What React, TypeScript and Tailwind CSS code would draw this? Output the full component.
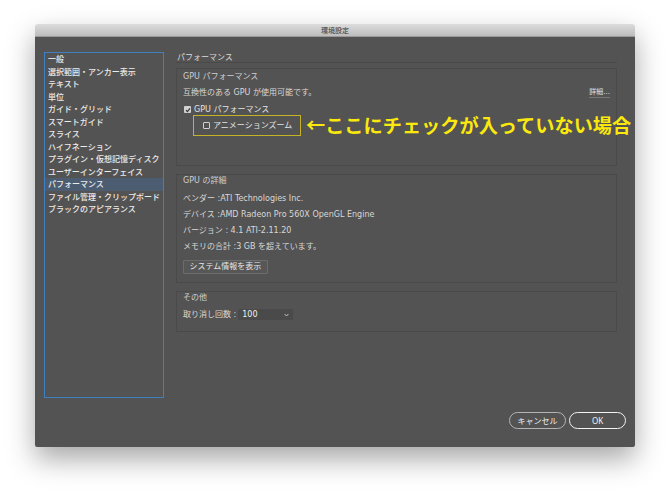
import React from "react";

const sidebarItems = [
  "一般",
  "選択範囲・アンカー表示",
  "テキスト",
  "単位",
  "ガイド・グリッド",
  "スマートガイド",
  "スライス",
  "ハイフネーション",
  "プラグイン・仮想記憶ディスク",
  "ユーザーインターフェイス",
  "パフォーマンス",
  "ファイル管理・クリップボード",
  "ブラックのアピアランス",
];

function CheckedBox() {
  return (
    <span className="inline-flex shrink-0 w-[7px] h-[7px] bg-[#d0d0d0] rounded-[1px] items-center justify-center">
      <svg width="6" height="6" viewBox="0 0 6 6">
        <path d="M1 3.2 L2.4 4.6 L5 1.4" stroke="#333" strokeWidth="1.1" fill="none" />
      </svg>
    </span>
  );
}

function EmptyBox() {
  return <span className="inline-block shrink-0 w-[7px] h-[7px] border border-[#cfcfcf] rounded-[1px]" />;
}

export default function App() {
  return (
    <div
      className="w-[670px] h-[493px] bg-white pl-[35px] pt-[24px]"
      style={{ fontFamily: '"Noto Sans", "Noto Sans CJK JP", sans-serif' }}
    >
      <div className="w-[600px] h-[423px] flex flex-col rounded-[3px] overflow-visible shadow-[0_12px_28px_rgba(0,0,0,0.35)]">
        {/* title bar */}
        <div className="h-[13px] rounded-t-[3px] bg-gradient-to-b from-[#dcdcdc] to-[#bdbdbd] flex items-center justify-center border-b border-[#9a9a9a]">
          <span className="text-[7px] leading-none text-[#333]">環境設定</span>
        </div>
        {/* body */}
        <div className="flex-1 bg-[#535353] flex flex-col pl-[9px] pt-[15px] rounded-b-[2px]">
          <div className="flex h-[346px]">
            {/* sidebar */}
            <div className="w-[120px] h-[346px] border border-[#3f80c2] flex flex-col">
              {sidebarItems.map((t) => (
                <div
                  key={t}
                  className={
                    "h-[12.5px] flex items-center pl-[3px] text-[8px] leading-none font-medium text-[#ececec] whitespace-nowrap " +
                    (t === "パフォーマンス" ? "bg-[#4c5d71]" : "")
                  }
                >
                  {t}
                </div>
              ))}
            </div>
            {/* content */}
            <div
              className="ml-[12px] w-[441px] flex flex-col text-[8px] text-[#d8d8d8]"
              style={{ fontFamily: '"DejaVu Sans", "Noto Sans CJK JP", sans-serif' }}
            >
              <div className="h-[11px] leading-[11px] pl-[1px] border-b border-[#4a4a4a] text-[#dcdcdc]">
                パフォーマンス
              </div>
              {/* group 1 */}
              <div className="mt-[5px] h-[98px] border border-[#4a4a4a] pl-[6px] pr-[6px] pt-[2px]">
                <div className="h-[11px] leading-[11px] text-[#cfcfcf]">GPU パフォーマンス</div>
                <div className="mt-[5px] h-[11px] leading-[11px] flex justify-between">
                  <span>互換性のある GPU が使用可能です。</span>
                  <span className="text-[7px] text-[#e0e0e0] border-b border-[#777] leading-[10px]">詳細...</span>
                </div>
                <div className="mt-[6px] h-[11px] flex items-center gap-[3px] pl-[1px]">
                  <CheckedBox />
                  <span className="leading-[11px] text-[#e4e4e4]">GPU パフォーマンス</span>
                </div>
                <div className="flex items-center">
                  <div className="shrink-0 ml-[10px] w-[108px] h-[21px] border-[1.5px] border-[#c4b324] flex items-center pl-[9px] gap-[3px]">
                    <EmptyBox />
                    <span className="leading-[11px] text-[#e4e4e4] whitespace-nowrap">アニメーションズーム</span>
                  </div>
                  <span
                    className="ml-[5px] shrink-0 whitespace-nowrap text-[19.2px] leading-[21px] font-bold text-[#fbe90e]"
                    style={{ fontFamily: '"Noto Sans CJK JP", sans-serif' }}
                  >
                    ←ここにチェックが入っていない場合
                  </span>
                </div>
              </div>
              {/* group 2 */}
              <div className="mt-[8px] h-[109px] border border-[#4a4a4a] pl-[6px] pt-[0px]">
                <div className="h-[11px] leading-[11px] text-[#cfcfcf]">GPU の詳細</div>
                <div className="mt-[7px] h-[11px] leading-[11px]">ベンダー :ATI Technologies Inc.</div>
                <div className="mt-[5px] h-[11px] leading-[11px]">デバイス :AMD Radeon Pro 560X OpenGL Engine</div>
                <div className="mt-[5px] h-[11px] leading-[11px]">バージョン : 4.1 ATI-2.11.20</div>
                <div className="mt-[5px] h-[11px] leading-[11px]">メモリの合計 :3 GB を超えています。</div>
                <div className="mt-[8px] w-[85px] h-[14px] border border-[#6c6c6c] rounded-[1px] flex items-center justify-center text-[#e6e6e6] bg-[#575757] whitespace-nowrap">
                  システム情報を表示
                </div>
              </div>
              {/* group 3 */}
              <div className="mt-[8px] h-[41px] border border-[#4a4a4a] pl-[6px]">
                <div className="h-[11px] leading-[11px] text-[#cfcfcf]">その他</div>
                <div className="mt-[6px] flex items-center">
                  <span className="leading-[11px]">取り消し回数 :</span>
                  <div className="ml-[2px] w-[55px] h-[11px] bg-[#4a4a4a] rounded-[1px] flex items-center justify-between pl-[4px] pr-[4px]">
                    <span className="text-[#f0f0f0] leading-none">100</span>
                    <svg width="5" height="4" viewBox="0 0 5 4">
                      <path d="M0.6 1 L2.5 3 L4.4 1" stroke="#cfcfcf" strokeWidth="0.9" fill="none" />
                    </svg>
                  </div>
                </div>
              </div>
            </div>
          </div>
          {/* buttons */}
          <div className="mt-[14px] h-[17px] flex justify-end gap-[3px] pr-[9px]">
            <div className="w-[57px] h-[17px] rounded-full border border-[#b4b4b4] flex items-center justify-center text-[8px] text-[#eeeeee]">
              キャンセル
            </div>
            <div className="w-[57px] h-[17px] rounded-full border-[1.5px] border-[#f2f2f2] flex items-center justify-center text-[8px] text-[#f4f4f4]">
              OK
            </div>
          </div>
        </div>
      </div>
    </div>
  );
}
